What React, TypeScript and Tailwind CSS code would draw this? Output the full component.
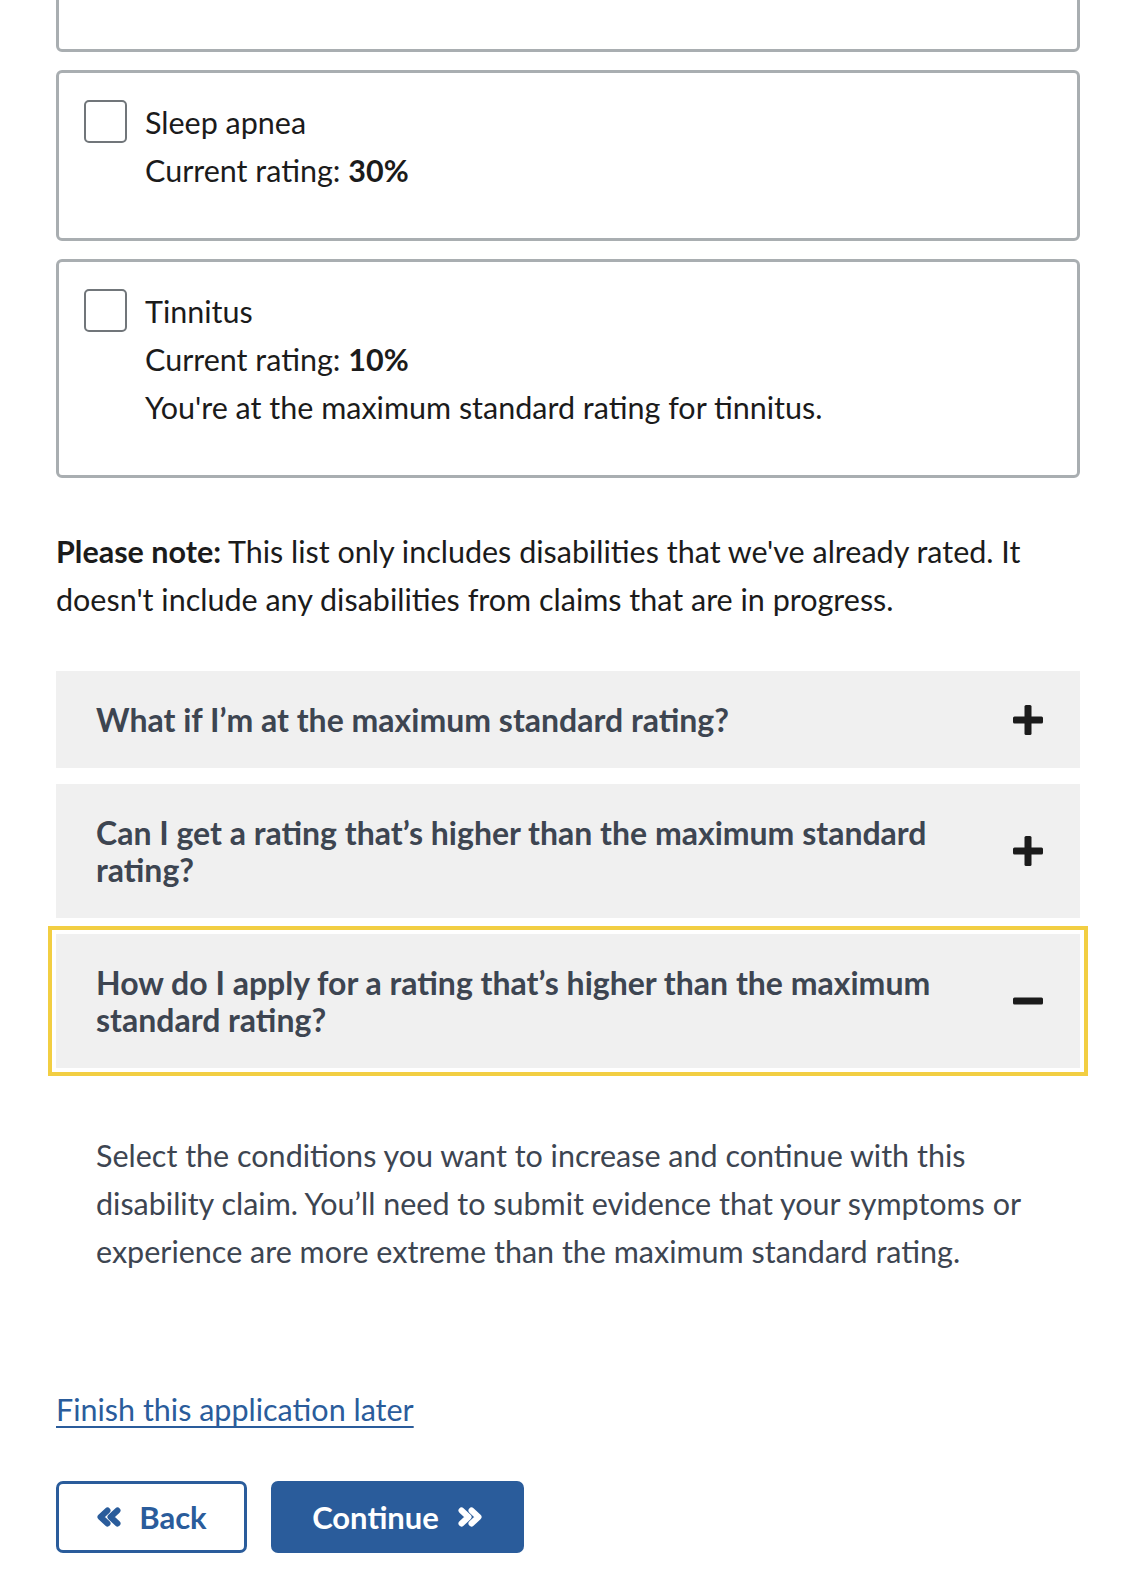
import React from "react";

const BLUE = "#2a5c9b";

function Checkbox() {
  return (
    <span className="mt-[2px] block h-[43px] w-[43px] shrink-0 rounded-[5px] border-2 border-[#71767a] bg-white" />
  );
}

function RatingCard({
  name,
  rating,
  note,
  className = "",
}: {
  name: string;
  rating: string;
  note?: string;
  className?: string;
}) {
  return (
    <div
      className={`flex gap-[18px] rounded-[6px] border-[3px] border-[#a9aeb1] pl-[25px] pr-6 pt-[25px] pb-[44px] ${className}`}
    >
      <Checkbox />
      <div className="leading-[48px]">
        <div>{name}</div>
        <div>
          Current rating: <span className="font-bold">{rating}</span>
        </div>
        {note && <div>{note}</div>}
      </div>
    </div>
  );
}

function PlusIcon() {
  return (
    <svg width="30" height="30" viewBox="0 0 30 30" className="shrink-0">
      <rect x="11.5" y="0" width="7" height="30" rx="1.5" fill="#1b1b1b" />
      <rect x="0" y="11.5" width="30" height="7" rx="1.5" fill="#1b1b1b" />
    </svg>
  );
}

function MinusIcon() {
  return (
    <svg width="30" height="30" viewBox="0 0 30 30" className="shrink-0">
      <rect x="0" y="11.5" width="30" height="7" rx="1.5" fill="#1b1b1b" />
    </svg>
  );
}

function Accordion({
  title,
  open = false,
}: {
  title: string;
  open?: boolean;
}) {
  return (
    <div
      className={`flex items-center gap-[40px] bg-[#f0f0f0] pl-[40px] pr-[37px] pt-[30px] pb-[30px] ${
        open ? "outline-[4px] outline-solid outline-offset-[4px] outline-[#f2ce42]" : ""
      }`}
    >
      <div className="flex-1 text-[32px] font-bold leading-[37px] text-[#3d4551]">
        {title}
      </div>
      {open ? <MinusIcon /> : <PlusIcon />}
    </div>
  );
}

function Chevrons({ dir, color }: { dir: "left" | "right"; color: string }) {
  const d =
    dir === "left"
      ? "M11.5 3.5 L4.5 10 L11.5 16.5 M21.5 3.5 L14.5 10 L21.5 16.5"
      : "M4.5 3.5 L11.5 10 L4.5 16.5 M14.5 3.5 L21.5 10 L14.5 16.5";
  return (
    <svg width="26" height="20" viewBox="0 0 26 20" className="shrink-0">
      <path
        d={d}
        fill="none"
        stroke={color}
        strokeWidth="6"
        strokeLinecap="round"
        strokeLinejoin="round"
      />
    </svg>
  );
}

export default function App() {
  return (
    <main className="min-h-screen w-full overflow-hidden bg-white font-['Lato',sans-serif] text-[30.5px] text-[#1b1b1b]">
      <div className="pl-[56px] pr-[44px] pb-[21px]">
        {/* previous condition card, scrolled mostly out of view */}
        <div className="mt-[-100px] h-[152px] rounded-[6px] border-[3px] border-[#a9aeb1]" />

        <RatingCard className="mt-[18px]" name="Sleep apnea" rating="30%" />

        <RatingCard
          className="mt-[18px]"
          name="Tinnitus"
          rating="10%"
          note="You're at the maximum standard rating for tinnitus."
        />

        <p className="mt-[49px] leading-[48px]">
          <span className="font-bold">Please note:</span> This list only includes
          disabilities that we've already rated. It doesn't include any
          disabilities from claims that are in progress.
        </p>

        <div className="mt-[48px] flex flex-col gap-[16px]">
          <Accordion title="What if I’m at the maximum standard rating?" />
          <Accordion title="Can I get a rating that’s higher than the maximum standard rating?" />
          <Accordion
            open
            title="How do I apply for a rating that’s higher than the maximum standard rating?"
          />
        </div>

        <p className="mt-[63px] pl-[40px] pr-[40px] leading-[48px] text-[#3d4551]">
          Select the conditions you want to increase and continue with this
          disability claim. You’ll need to submit evidence that your symptoms or
          experience are more extreme than the maximum standard rating.
        </p>

        <div className="mt-[110px] leading-[48px]">
          <a
            href="#"
            className="text-[#2a5c9b] underline decoration-[2px] underline-offset-[5px]"
          >
            Finish this application later
          </a>
        </div>

        <div className="mt-[48px] flex gap-[24px]">
          <button className="flex h-[72px] w-[191px] items-center justify-center gap-[17px] rounded-[7px] border-[3px] border-[#2a5c9b] bg-white text-[31px] font-bold text-[#2a5c9b]">
            <Chevrons dir="left" color={BLUE} />
            Back
          </button>
          <button className="flex h-[72px] w-[253px] items-center justify-center gap-[18px] rounded-[7px] bg-[#2a5c9b] text-[31px] font-bold text-white">
            Continue
            <Chevrons dir="right" color="#ffffff" />
          </button>
        </div>
      </div>
    </main>
  );
}
